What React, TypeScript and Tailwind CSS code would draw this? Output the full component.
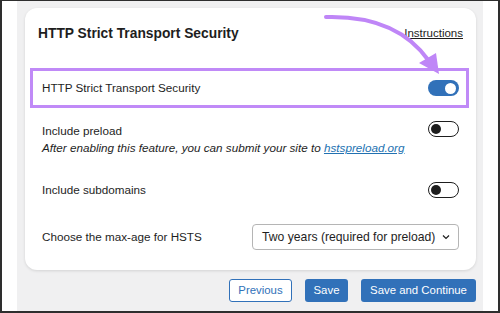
import React from "react";

function Toggle({ on }: { on: boolean }) {
  if (on) {
    return (
      <div className="w-[31px] h-[16px] rounded-full bg-[#3171b9] flex items-center justify-end pr-[3px]">
        <div className="w-[11px] h-[11px] rounded-full bg-white" />
      </div>
    );
  }
  return (
    <div className="w-[31px] h-[16px] rounded-full bg-white border-[1.5px] border-[#1e1e1e] flex items-center pl-[2px]">
      <div className="w-[10px] h-[10px] rounded-full bg-[#1e1e1e]" />
    </div>
  );
}

export default function App() {
  return (
    <div
      className="relative w-[500px] h-[313px] bg-white border-t border-l-[2px] border-r-[2px] border-b-[2px] border-[#2e2e2e] flex overflow-hidden text-[#1e1e1e]"
      style={{ fontFamily: '"Liberation Sans", Arial, sans-serif' }}
    >
      <div className="w-[15px] shrink-0 bg-white" />
      <div className="w-[466px] shrink-0 bg-[#f0f0f1] pl-[8px] pr-[7px] pt-[7px]">
        <div className="bg-white rounded-[12px] shadow-[0_1px_3px_rgba(0,0,0,0.12)] h-[262px] pt-[15px]">
          <div className="flex items-center justify-between pl-[13px] pr-[13px] h-[22px]">
            <div className="text-[13.8px] font-bold">HTTP Strict Transport Security</div>
            <div className="text-[11.5px] underline">Instructions</div>
          </div>
          <div className="mt-[23px] ml-[5px] mr-[7px] h-[40px] border-[3px] border-[#c08af7] flex items-center justify-between pl-[9px] pr-[7px]">
            <div className="text-[11.7px]">HTTP Strict Transport Security</div>
            <Toggle on />
          </div>
          <div className="mt-[14px] pl-[17px] pr-[17px] flex justify-between">
            <div>
              <div className="text-[11.7px] leading-[17px]">Include preload</div>
              <div className="text-[11.7px] italic leading-[17px] whitespace-nowrap">
                After enabling this feature, you can submit your site to{" "}
                <span className="text-[#2271b1] underline">hstspreload.org</span>
              </div>
            </div>
            <div className="pt-[-1px] -mt-[1px]">
              <Toggle on={false} />
            </div>
          </div>
          <div className="mt-[25px] pl-[17px] pr-[17px] flex justify-between items-center h-[17px]">
            <div className="text-[11.7px]">Include subdomains</div>
            <Toggle on={false} />
          </div>
          <div className="mt-[26px] pl-[17px] pr-[17px] flex justify-between items-center">
            <div className="text-[11.7px]">Choose the max-age for HSTS</div>
            <div className="w-[207px] h-[26px] border border-[#b5b5b5] rounded-[4px] flex items-center justify-between pl-[9px] pr-[7px]">
              <span className="text-[12.2px]">Two years (required for preload)</span>
              <svg width="10" height="10" viewBox="0 0 10 10" fill="none">
                <path d="M2 3.5 L5 6.5 L8 3.5" stroke="#1e1e1e" strokeWidth="1.2" />
              </svg>
            </div>
          </div>
        </div>
        <div className="mt-[9px] flex justify-end gap-[13px]">
          <div className="h-[23px] w-[63px] border border-[#3171b9] rounded-[3px] bg-white text-[#3171b9] text-[11.4px] flex items-center justify-center">
            Previous
          </div>
          <div className="h-[23px] w-[43px] rounded-[3px] bg-[#3171b9] text-white text-[11.4px] flex items-center justify-center">
            Save
          </div>
          <div className="h-[23px] w-[115px] rounded-[3px] bg-[#3171b9] text-white text-[11.4px] flex items-center justify-center">
            Save and Continue
          </div>
        </div>
      </div>
      <div className="flex-1 bg-white" />
      <svg className="absolute left-0 top-0" width="500" height="313" viewBox="0 0 500 313">
        <path d="M324 16 Q395 14 427 60" stroke="#bf86f7" strokeWidth="4" fill="none" strokeLinecap="round" />
        <path d="M417 62 L437 73 L434 52 Z" fill="#bf86f7" />
      </svg>
    </div>
  );
}
